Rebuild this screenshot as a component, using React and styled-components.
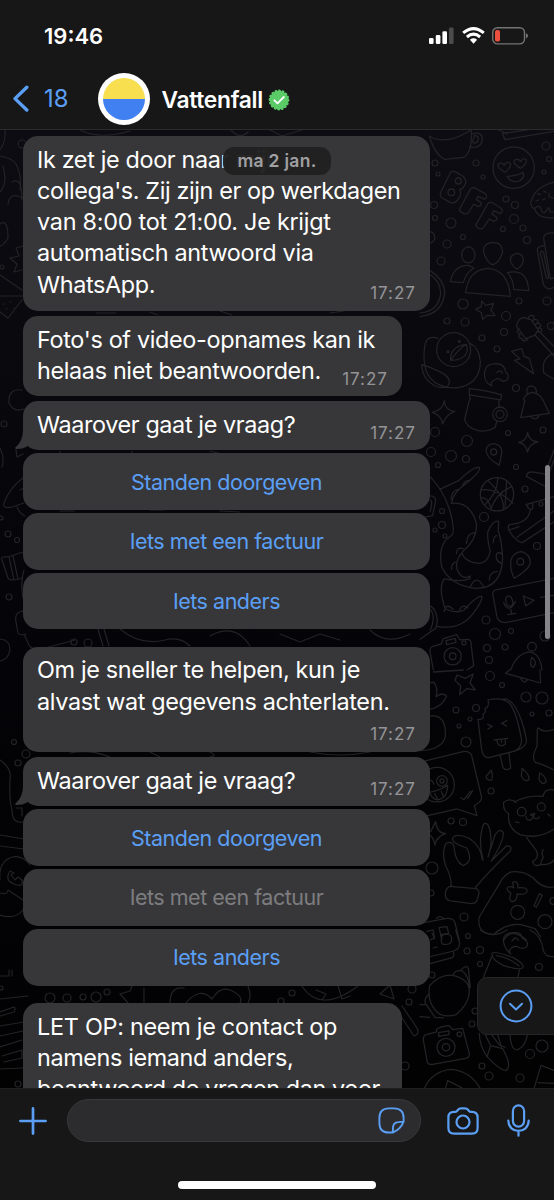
import React from "react";
import styled, { createGlobalStyle } from "styled-components";

const chat = [
  {
    width: 407,
    height: 174.8,
    gap: 5.2,
    time: "17:27",
    lines: [
      ["Ik zet je door naar mijn", -0.35],
      ["collega's. Zij zijn er op werkdagen", -0.38],
      ["van 8:00 tot 21:00. Je krijgt", -0.26],
      ["automatisch antwoord via", -0.33],
      ["WhatsApp.", -0.35],
    ],
  },
  {
    width: 379,
    height: 80,
    gap: 5,
    time: "17:27",
    lines: [
      ["Foto's of video-opnames kan ik", -0.33],
      ["helaas niet beantwoorden.", -0.35],
    ],
  },
  {
    width: 407,
    height: 49,
    gap: 3.3,
    time: "17:27",
    tail: true,
    lines: [["Waarover gaat je vraag?", -0.38]],
    options: [
      { label: "Standen doorgeven" },
      { label: "Iets met een factuur" },
      { label: "Iets anders" },
    ],
  },
  {
    width: 407,
    height: 105,
    gap: 5.3,
    time: "17:27",
    lines: [
      ["Om je sneller te helpen, kun je", -0.33],
      ["alvast wat gegevens achterlaten.", -0.35],
    ],
  },
  {
    width: 407,
    height: 49,
    gap: 3.3,
    time: "17:27",
    tail: true,
    lines: [["Waarover gaat je vraag?", -0.38]],
    options: [
      { label: "Standen doorgeven" },
      { label: "Iets met een factuur", disabled: true },
      { label: "Iets anders" },
    ],
  },
  {
    width: 379,
    height: 140,
    gap: 0,
    lines: [
      ["LET OP: neem je contact op", -0.27],
      ["namens iemand anders,", -0.38],
      ["beantwoord de vragen dan voor", -0.4],
    ],
  },
];

// Small bubbles scattered between the wallpaper drawings: x, y, radius
const dots = [
  [435, 163, 3], [438, 174, 2], [476, 163, 3], [483, 177, 2], [546, 146, 4], [549, 159, 2.5],
  [544, 172, 2], [434, 205, 3.5], [435, 218, 2.5], [451, 223, 5], [506, 199, 3], [515, 205, 3.5],
  [514, 219, 4.5], [503, 229, 2.5], [523, 228, 3], [463, 237, 2.5], [447, 244, 4], [527, 240, 3.5],
  [441, 261, 4], [463, 304, 5], [447, 321, 3], [465, 322, 4], [519, 301, 3], [547, 301, 4],
  [506, 316, 4.5], [504, 332, 3.5], [482, 338, 3], [497, 349, 3], [551, 326, 3.5], [516, 388, 3.5],
  [435, 432, 4.5], [467, 441, 5.5], [508, 433, 2.5], [543, 430, 3], [431, 452, 4.5], [451, 456, 5.5],
  [466, 459, 3.5], [438, 465, 2.5], [516, 467, 2.5], [525, 489, 3], [484, 517, 4.5], [442, 511, 2.5],
  [442, 525, 3.5], [435, 530, 2], [445, 536, 2], [541, 504, 2], [537, 546, 3.5], [486, 620, 4],
  [495, 634, 5.5], [511, 631, 2.5], [487, 648, 3.5], [505, 647, 3], [489, 660, 3.5], [545, 636, 5],
  [490, 676, 4.5], [502, 685, 2.5], [526, 697, 5], [542, 698, 6], [456, 710, 3], [476, 708, 3.5],
  [470, 719, 2], [459, 726, 2], [466, 742, 5], [532, 714, 2], [549, 713, 3], [491, 791, 3],
  [451, 821, 3], [463, 822, 3.5], [432, 868, 6], [431, 893, 3], [464, 917, 4], [468, 936, 2.5],
  [467, 951, 3], [480, 950, 3.5], [480, 964, 2.5], [539, 967, 3.5], [432, 975, 3], [475, 1011, 3],
  [472, 1024, 3], [530, 1054, 4.5], [542, 1046, 6], [482, 1066, 3], [489, 1076, 4], [520, 1078, 4],
  [22, 144, 4], [4, 424, 3], [8, 534, 3], [17, 540, 2.5], [9, 597, 3], [1, 518, 2],
  [14, 742, 2.5], [26, 754, 4], [18, 763, 3], [74, 642, 3], [88, 643, 4], [50, 998, 5],
  [67, 998, 4], [83, 997, 3], [96, 997, 5], [107, 992, 3], [292, 993, 3], [281, 1001, 3],
  [1, 988, 2], [18, 1084, 3], [409, 1002, 3], [405, 1066, 4], [412, 989, 4], [2, 267, 2],
];

const Wallpaper = () => (
  <Doodles viewBox="0 130 554 958" width="554" height="958" aria-hidden="true">
    <defs>
      <linearGradient id="night" x1="0" y1="0" x2="0" y2="1">
        <stop offset="0" stopColor="#0d0c13" />
        <stop offset="0.35" stopColor="#07070b" />
        <stop offset="0.65" stopColor="#030306" />
        <stop offset="1" stopColor="#020203" />
      </linearGradient>
    </defs>
    <rect y="130" width="554" height="958" fill="url(#night)" />
    <g fill="none" stroke="#232326" strokeWidth="1.2" strokeLinejoin="round" strokeLinecap="round">
      {dots.map(([x, y, r]) => (
        <circle key={`${x}-${y}`} cx={x} cy={y} r={r} />
      ))}

      {/* cup, BFF, smiley, cupcake, people, duck, guitar */}
      <g transform="translate(420 130) scale(.3333)" strokeWidth="3.8">
        <path d="M28 18Q45 75 75 88L130 82Q158 68 154 0M28 18Q75 48 150 2M155 12Q188 2 187 30Q181 58 148 50M163 17Q178 16 174 32Q166 45 158 36Z" />
        <path d="M236 0L262 12M247 10L255 29L402 4M247 10L320 0" />
        <circle cx="281" cy="113" r="62" />
        <path d="M255 127Q228 111 235 102Q246 94 252 106Q262 91 271 101Q274 112 255 127ZM302 115Q278 101 283 91Q294 83 302 95Q310 80 319 90Q322 100 302 115ZM261 139Q290 139 309 127Q315 145 297 153Q275 160 261 139Z" />
        <path d="M91 128Q98 120 111 128L129 139Q145 153 132 169Q130 176 119 178Q127 189 116 205Q106 223 90 217L67 204Q57 197 63 185Z" />
        <circle cx="115" cy="153" r="9" />
        <circle cx="94" cy="187" r="10" />
        <path d="M152 176Q160 170 170 177L196 191Q204 200 194 208L174 199L169 209L183 217Q187 226 176 230L161 223L144 249Q134 256 120 244Q117 240 122 231ZM204 220Q211 214 220 220L243 235Q252 243 241 251L221 242L216 252L230 262Q233 272 221 274L208 267L191 292Q182 302 169 290Q165 284 172 277Z" />
        <path d="M402 156Q340 172 332 220Q336 236 344 235Q350 265 402 264M344 235Q359 222 364 239Q370 259 381 239Q388 224 390 246L402 247M348 213L356 210M353 191L360 194M371 183L378 187M368 210L375 206M388 190Q382 204 402 205" />
        <ellipse cx="145" cy="375" rx="20" ry="24" />
        <path d="M218 337Q188 340 191 368Q205 404 219 404Q238 399 248 365Q247 337 218 337ZM290 370Q268 375 272 396Q285 418 292 417Q311 405 310 386Q305 370 290 370Z" />
        <path d="M91 455Q101 405 145 406L162 414Q138 428 130 458ZM137 488Q145 419 204 415Q265 420 271 499ZM262 428Q323 414 326 482L281 478Q280 446 262 428Z" />
        <path d="M30 422Q72 448 74 488Q68 552 0 560M30 434Q60 451 62 490Q56 544 0 549M30 305Q46 308 44 328Q39 338 30 340" />
        <path d="M185 513L197 526L221 520L213 540L225 557L202 556L188 568L184 548L167 538L184 530Z" />
        <path d="M402 309Q370 307 371 325L391 447L402 444M371 347Q351 350 352 361L370 463Q382 484 402 472M364 363Q359 371 364 380L379 444Q386 450 385 438L371 367Z" />
        <circle cx="101" cy="659" r="51" />
        <path d="M54 625Q24 615 16 640Q9 669 14 706Q26 772 108 774Q181 763 181 695Q177 651 151 641M5 704Q28 710 65 728Q100 748 82 770Q48 781 18 745Q5 724 5 704ZM92 691Q88 650 139 643Q151 679 109 690ZM92 691Q118 655 139 643" />
        <circle cx="118" cy="634" r="3" />
        <circle cx="84" cy="665" r="3" />
        <path d="M309 562L333 569L355 600L344 616L317 626L290 590Q291 569 309 562ZM325 568Q325 552 342 558Q341 574 336 575Q349 561 355 576L345 585Q358 573 363 588L352 596Q370 590 363 607L354 606M297 596Q285 607 301 613Q290 622 307 627Q306 637 322 629M345 615L402 678M356 603L402 650M402 670Q361 684 372 730L402 748" />
        <path d="M274 664L305 656L312 679L328 685L341 731L283 691L300 687Z" />
        <path d="M194 742Q190 704 221 702Q253 697 258 728Q270 735 261 750Q247 759 239 747L228 747Q207 756 216 768Q198 760 194 742ZM230 728Q242 716 247 730" />
        <path d="M148 776Q195 780 245 795L242 810L148 795ZM148 795L151 810M322 790Q316 770 335 768Q353 774 348 791M310 810Q315 791 337 787Q360 791 368 810" />
      </g>

      {/* mug, bell, pins, ball, octopus, shoe, voice note, camera */}
      <g transform="translate(420 400) scale(.3333)" strokeWidth="3.8">
        <path d="M148 0L134 58Q139 82 174 92Q203 97 226 82L230 64M236 0L238 22M315 0L302 53L388 40L369 0M331 49Q347 67 359 44" />
        <circle cx="240" cy="43" r="22" />
        <circle cx="240" cy="43" r="12" />
        <path d="M73 2Q74 31 105 34Q78 42 68 72Q64 45 37 37Q70 30 73 2ZM323 97Q327 124 354 126Q329 131 322 156Q319 132 296 127Q320 123 323 97ZM238 196Q199 175 198 151Q202 131 222 131Q249 137 245 160ZM283 535Q269 510 273 479Q283 455 306 455Q332 464 331 491Q322 512 283 535Z" />
        <circle cx="221" cy="156" r="9" />
        <circle cx="301" cy="485" r="10" />
        <circle cx="231" cy="283" r="50" />
        <path d="M184 270Q228 262 279 310M204 242Q257 291 249 329M233 234Q235 276 194 315M276 260Q228 278 212 329M185 293Q206 293 213 326M260 242L255 325" />
        <path d="M30 230Q70 270 89 330Q109 402 92 408Q52 432 65 500Q92 558 170 565Q244 565 248 476Q245 420 235 393L236 364Q220 358 204 394Q200 413 211 454Q203 489 177 490Q136 487 125 459M59 268L116 242Q160 199 178 202Q185 212 139 250Q98 279 94 310Q154 304 170 375Q169 421 129 454Q95 493 121 525Q134 538 151 528L149 536Q123 548 72 537Q54 566 76 627Q110 642 132 630Q174 584 186 590Q186 605 159 641Q121 692 51 679M93 297Q97 270 115 268M128 257Q135 240 146 242M139 430Q142 399 164 399M109 461Q111 439 129 446M95 508Q92 489 111 486M220 429Q219 409 231 407M244 490Q224 482 230 461Q237 455 246 462M208 540Q208 516 232 514M150 562Q169 520 190 559M72 635Q79 606 100 629M118 630Q129 610 144 624" />
        <path d="M30 288Q50 288 46 307L38 347L0 354M30 300Q40 302 30 335M30 617Q50 629 52 663L48 684L0 718M30 627Q49 651 31 690" />
        <path d="M318 314L402 290M319 313Q325 331 337 327Q341 314 336 311M331 331Q324 369 272 373Q261 373 267 391Q285 424 307 428L402 365M291 412L402 333M268 390L297 380M402 150L378 215M374 222L334 216Q321 216 319 229L373 258M402 180L384 229" />
        <path d="M402 535L231 569Q216 571 219 586L231 651Q236 667 255 668L402 638M264 588Q252 591 261 615Q273 624 279 611Q277 588 264 588ZM251 608Q267 642 286 605M272 628L276 643M264 644L287 640M310 588L317 618L342 601ZM361 592L402 586" />
        <path d="M44 738L64 732L70 716L110 704L120 720L145 718Q154 721 153 731L161 797L141 810M44 738Q28 740 30 756L40 810M78 722L106 715L108 727L80 734Z" />
        <circle cx="98" cy="769" r="26" />
        <circle cx="98" cy="769" r="10" />
        <circle cx="132" cy="729" r="6" />
        <path d="M272 810Q292 758 330 756Q361 762 366 810M336 772Q325 800 341 802Q353 785 336 772Z" />
        <circle cx="336" cy="740" r="13" />
      </g>

      {/* ice cream, sticker bubble, bear, ok hand, gamepad */}
      <g transform="translate(420 670) scale(.3333)" strokeWidth="3.8">
        <path d="M40 6L130 0M257 10L362 39L360 0M257 10L268 0M302 24Q312 46 323 28M111 15L136 25L160 12L150 39L166 60L140 56L119 74L122 48L105 31Z" />
        <path d="M204 90Q244 80 268 99Q290 125 305 211Q303 238 281 244L210 262Q190 266 185 240L174 148Q194 150 189 133Q199 128 195 116Q209 111 204 90ZM250 87Q280 84 304 150Q323 209 318 220Q309 238 281 244M241 258L249 293Q257 304 272 294L267 250M203 163L217 169L204 177M261 152L245 160L260 168M222 210L263 205M230 210L233 220Q242 234 256 222L256 206M244 209L245 217" />
        <path d="M30 38L42 37Q55 55 48 80Q66 65 80 78Q69 109 30 118M30 138Q79 131 76 200Q66 240 0 242" />
        <path d="M10 274L132 244Q150 243 155 257L185 382Q184 397 163 406L171 437L111 417L0 442M123 383L132 389L151 364M143 386L158 362" />
        <circle cx="51" cy="344" r="52" />
        <circle cx="66" cy="333" r="16" />
        <circle cx="66" cy="333" r="6" />
        <path d="M28 367Q61 362 83 346Q82 386 52 390Q37 388 28 367ZM44 371L54 390M64 364L71 381M30 330Q38 332 42 342M214 301Q221 327 213 331Q196 330 199 318ZM306 295Q330 315 327 329Q313 338 304 318ZM359 309Q379 319 378 336Q365 347 357 328ZM402 178Q370 190 356 174Q350 174 352 190L351 229Q333 263 346 277Q367 282 402 300" />
        <path d="M289 397Q268 382 251 397Q248 420 266 431Q261 475 300 494Q355 509 402 477M282 396Q324 374 369 379Q374 354 402 360M331 434L344 430L340 439ZM318 439Q319 453 332 450Q339 446 339 440Q349 453 358 441M286 456L297 458M384 432L390 438M320 503L349 542Q359 562 338 575Q340 592 363 584Q361 574 370 562Q362 548 370 539M363 584Q391 586 402 570" />
        <circle cx="305" cy="425" r="13" />
        <circle cx="364" cy="411" r="12" />
        <path d="M94 649Q93 615 77 588Q63 545 79 519Q98 513 102 530Q105 576 130 587Q162 573 140 534Q100 522 97 506Q105 488 146 504Q183 527 187 569M189 570Q173 507 191 462Q209 452 213 505Q215 529 204 561M204 561L226 493Q240 473 250 488Q251 515 213 574L259 528Q278 526 271 543Q217 593 164 655M91 649L160 655Q177 655 177 669L171 692Q163 704 150 700L91 693Q75 689 76 672Q77 652 91 649ZM47 455Q51 490 77 491Q48 500 45 526Q41 503 30 496M47 455L32 485" />
        <path d="M402 651Q367 657 340 624Q309 601 275 606Q259 610 248 625L178 741Q168 789 220 794Q261 758 303 764L345 776L362 800M278 637Q295 628 294 654Q324 650 321 665Q317 676 291 672Q291 696 276 695Q264 690 273 670Q258 661 262 654Q267 646 281 654ZM358 671L367 676L349 712L342 708ZM252 810Q274 770 319 810" />
        <circle cx="293" cy="727" r="21" />
        <circle cx="375" cy="755" r="21" />
        <circle cx="400" cy="693" r="10" />
        <path d="M0 760L80 745Q102 744 105 759L118 810M49 745Q60 735 69 744M20 784L40 780L44 806M57 773L81 770L86 790L62 794ZM62 794L65 810" />
      </g>

      {/* clock, croissant, jar, camera and the bottom edge */}
      <g transform="translate(420 930) scale(.3333)" strokeWidth="3.8">
        <path d="M107 0L119 40Q118 58 101 63L0 87M30 101L97 83Q105 76 100 66M36 9L43 25L32 29M61 17L82 12M66 20Q60 44 72 43Q95 45 95 28Q96 15 82 12M40 54L52 51" />
        <path d="M29 167Q62 131 98 136Q148 147 148 184Q147 224 107 255Q62 265 44 238Q21 210 29 167ZM99 136Q102 122 122 121Q149 133 148 184M122 121Q138 103 145 115L151 172M28 191Q13 203 15 218L45 262L70 264M15 224L0 224M0 260L29 262" />
        <path d="M217 69Q225 63 280 83Q318 105 307 114Q297 121 249 106Q210 85 217 69ZM229 77Q265 81 297 108M215 81L190 142M299 119L293 142M250 34Q250 6 284 8Q304 7 306 23Q329 36 320 50Q308 60 293 50L283 49Q262 58 272 72Q255 58 250 34ZM330 0Q365 17 370 61Q376 82 402 80M181 0Q218 27 261 0M276 33Q287 16 295 31" />
        <path d="M50 306L49 298Q61 289 88 287L98 299L128 295L148 371Q150 382 137 385L38 403Q22 406 21 392L10 330Q9 315 21 313ZM56 308L87 303L87 314L56 319Z" />
        <circle cx="78" cy="352" r="27" />
        <circle cx="78" cy="352" r="11" />
        <circle cx="118" cy="313" r="7" />
        <path d="M178 310Q178 345 201 381L212 347L196 315M212 347L248 356Q278 409 258 422Q236 419 202 380M212 310L238 345L255 352M233 314L244 350M270 315Q273 360 292 360Q315 352 322 315M14 473Q38 422 96 418Q152 425 179 473M83 452L77 473M83 452L125 473M343 473L363 406L402 421M354 458L402 460" />
      </g>

      {/* left edge */}
      <path d="M0 150Q6 142 5 130M0 156Q12 158 16 164Q22 176 20 190M0 192Q8 184 3 166M12 182Q22 176 22 200M8 204Q10 191 23 198M0 224Q8 218 8 238Q3 246 0 246M23 246L16 248L19 256L10 258L17 264L14 272L22 270M0 275L22 290M0 296H23M0 312L8 318L22 300M3 304h1M10 302h1M6 309h1M14 308h1" />
      <path d="M22 390Q8 388 9 403Q14 413 24 409M0 448Q5 458 2 467M16 450L17 457L23 454M4 503Q10 487 23 478M4 503Q2 509 12 507L24 503M20 490L24 488M17 507Q20 514 25 516M2 560Q0 556 8 557L23 552M2 560L8 578Q10 582 23 578M9 557L14 580M13 556L18 579M24 570Q20 582 23 598M0 639Q10 640 10 650Q8 660 0 661M23 611Q14 612 16 622L18 633Q20 636 26 634M24 634L29 645Q32 651 45 648L75 640M98 629L103 646M104 629L109 646" />
      <path d="M0 760Q12 768 10 780Q9 800 12 810Q12 824 23 822M16 808h6v8M0 835L30 840M0 846L24 849M0 893Q8 895 8 890L23 900M0 915Q15 920 23 910M0 880Q-2 862 12 857Q23 855 30 865M10 871Q4 880 14 884Q24 888 22 880L18 877L15 880L11 875L14 873Z" />
      <path d="M0 999L28 996M0 1012L14 1007Q16 1009 14 1012L0 1016M0 1026L24 1022M0 1036L23 1031M0 1047L22 1040M2 1056L22 1050V1058L4 1062M0 1069L23 1068M0 976H9V970M12 976V970M120 994L130 991L132 986M120 994L128 1003M144 988V1003M170 1003Q170 986 184 988M186 1003Q200 986 212 999Q220 986 230 990Q244 996 240 1003M248 986Q252 996 248 1003M302 986Q320 1014 358 986M316 990L326 994L322 1000M338 986L342 999L350 996M390 985L394 999L380 994ZM402 1006L417 1028Q420 1034 414 1036L402 1018" />
      <path d="M80 130Q100 140 130 131M231 130Q240 140 248 132M270 130L282 136L302 130M96 313h20M150 312l8 3M220 311l12 4M330 313l14-2M60 451v2M132 451v2M210 451l8 2M60 511h14M150 510h14M220 511l20 1M120 629Q140 646 165 640Q180 636 190 646M210 636Q235 622 250 646M280 634l20 8l20-8l20 6M370 630q16 16 40 4M70 753q20-4 40 4M150 752l10 5M210 752q8 4 0 5M310 752q30 6 60 0" />
    </g>
  </Doodles>
);

const Bubble = ({ message }) => (
  <MessageBox $width={message.width} $height={message.height} $gap={message.gap}>
    {message.lines.map(([text, spacing]) => (
      <Line key={text} $spacing={spacing}>
        {text}
      </Line>
    ))}
    {message.time && <Time>{message.time}</Time>}
    {message.tail && (
      <Tail viewBox="0 0 16 20" aria-hidden="true">
        <path d="M8 0Q8 11 .5 17.6Q-.4 18.8 1.4 18.9Q8 19 12 16.4L16 12V0Z" />
      </Tail>
    )}
  </MessageBox>
);

export default function App() {
  return (
    <>
      <GlobalStyle />
      <Phone>
        <Header>
          <StatusBar>
            <Clock>19:46</Clock>
            <StatusIcons>
              <svg width="25" height="17" viewBox="0 0 25 17">
                <rect x="0" y="11" width="4.6" height="6" rx="1.3" fill="#fff" />
                <rect x="6.8" y="8" width="4.6" height="9" rx="1.3" fill="#fff" />
                <rect x="13.4" y="4.3" width="4.6" height="12.7" rx="1.3" fill="#fff" />
                <rect x="20" y="0.4" width="4.6" height="16.6" rx="1.3" fill="#4b4b4b" />
              </svg>
              <svg width="23" height="17" viewBox="0 0 23 17" fill="none" stroke="#fff" strokeWidth="3">
                <path d="M1.2 5.9Q11.5-2.7 21.8 5.9" />
                <path d="M4.9 10Q11.5 4.2 18.1 10" />
                <path d="M7.9 12.7Q11.5 9.9 15.1 12.7L11.5 16.8Z" fill="#fff" stroke="none" />
              </svg>
              <svg width="37" height="18" viewBox="0 0 37 18">
                <rect x="0.7" y="0.7" width="31.8" height="16.2" rx="4.8" fill="none" stroke="#747474" strokeWidth="1.4" />
                <rect x="3" y="3" width="5" height="11.6" rx="1.9" fill="#ea4e3e" />
                <path d="M34 6.2Q36 7 36 8.8Q36 10.6 34 11.4Z" fill="#747474" />
              </svg>
            </StatusIcons>
          </StatusBar>
          <ContactBar>
            <BackIcon viewBox="0 0 17 28">
              <path d="M14.8 2.2L3 13.6L14.8 25" />
            </BackIcon>
            <Unread>18</Unread>
            <Avatar>
              <Logo />
            </Avatar>
            <ContactName>Vattenfall</ContactName>
            <Badge viewBox="-11 -11 22 22">
              <circle r="9.3" fill="#5bcb68" />
              <circle r="9.2" fill="none" stroke="#5bcb68" strokeWidth="2.4" strokeLinecap="round" strokeDasharray="0.6 3.013" />
              <path d="M-4.6 .3L-1.5 3.4L4.8-3" fill="none" stroke="#fff" strokeWidth="1.8" strokeLinecap="round" strokeLinejoin="round" />
            </Badge>
          </ContactBar>
        </Header>

        <Chat>
          <Wallpaper />
          <Messages>
            {chat.map((message, index) => (
              <React.Fragment key={index}>
                <Bubble message={message} />
                {message.options && (
                  <Options>
                    {message.options.map((option) => (
                      <Option key={option.label} disabled={option.disabled}>
                        {option.label}
                      </Option>
                    ))}
                  </Options>
                )}
              </React.Fragment>
            ))}
          </Messages>
          <DateLabel>ma 2 jan.</DateLabel>
          <ScrollThumb />
          <ScrollDown>
            <svg width="34" height="34" viewBox="0 0 34 34">
              <circle cx="17" cy="17" r="15.4" />
              <path d="M11 14.8L17 20.4L23 14.8" />
            </svg>
          </ScrollDown>
        </Chat>

        <Footer>
          <Composer>
            <PlusIcon viewBox="0 0 28 28">
              <path d="M14 1.4V26.6M1.4 14H26.6" />
            </PlusIcon>
            <Input>
              <svg width="27" height="27" viewBox="0 0 27 27">
                <path d="M14.8 25.5H11Q1.4 25.5 1.4 15.9V11Q1.4 1.4 11 1.4H16Q25.6 1.4 25.6 11V14.6Q22.5 22.4 14.8 25.5ZM14.8 25.5L15 20.6Q15.2 15.4 20.4 15.1L25.6 14.6" />
              </svg>
            </Input>
            <CameraIcon viewBox="0 0 32 28">
              <path d="M9.8 4.2L11 2.8Q12.2 1.4 14 1.4H18Q19.8 1.4 21 2.8L22.2 4.2Q22.8 4.8 24 4.8H25Q30.6 4.8 30.6 10.4V21Q30.6 26.6 25 26.6H7Q1.4 26.6 1.4 21V10.4Q1.4 4.8 7 4.8H8Q9.2 4.8 9.8 4.2Z" />
              <circle cx="16" cy="15" r="6.5" />
            </CameraIcon>
            <MicIcon viewBox="0 0 23 33">
              <rect x="5.9" y="1.3" width="11.2" height="21.4" rx="5.6" />
              <path d="M1.3 16.6C1.3 30.3 21.7 30.3 21.7 16.6M11.5 26.9V31.7" />
            </MicIcon>
          </Composer>
          <HomeIndicator />
        </Footer>
      </Phone>
    </>
  );
}

const GlobalStyle = createGlobalStyle`
  * {
    box-sizing: border-box;
  }
  body {
    margin: 0;
    background: #171717;
  }
`;

const Phone = styled.div`
  display: flex;
  flex-direction: column;
  width: 554px;
  height: 1200px;
  overflow: hidden;
  background: #171717;
  color: #fff;
  font-family: Inter, "Liberation Sans", sans-serif;
`;

const Header = styled.header`
  flex: none;
  height: 130px;
  border-bottom: 1px solid #2b2b2d;
`;

const StatusBar = styled.div`
  display: flex;
  justify-content: space-between;
  height: 72px;
  padding: 22px 25px 0 44px;
`;

const Clock = styled.span`
  font-size: 22px;
  line-height: 28px;
  font-weight: 600;
  letter-spacing: 0;
`;

const StatusIcons = styled.div`
  display: flex;
  align-items: flex-start;
  gap: 7.5px;
  padding-top: 4.5px;
`;

const ContactBar = styled.div`
  display: flex;
  align-items: center;
  height: 53px;
  padding-left: 12px;
`;

const BackIcon = styled.svg`
  width: 17px;
  height: 28px;
  fill: none;
  stroke: #5b9ff5;
  stroke-width: 3.4;
  stroke-linecap: round;
  stroke-linejoin: round;
`;

const Unread = styled.span`
  width: 54px;
  margin-left: 15px;
  color: #5b9ff5;
  font-size: 23.8px;
`;

const Avatar = styled.div`
  width: 52px;
  height: 52px;
  padding: 5px;
  border-radius: 50%;
  background: #fff;
`;

const Logo = styled.div`
  height: 100%;
  border-radius: 50%;
  background: linear-gradient(#f7df4f 49%, #7d9a9a 49%, #7d9a9a 51%, #4080f0 51%);
`;

const ContactName = styled.span`
  margin: 2px 5.5px 0 11.5px;
  font-size: 22.8px;
  font-weight: 600;
  letter-spacing: -0.3px;
`;

const Badge = styled.svg`
  width: 22px;
  height: 22px;
  margin-top: 2px;
`;

const Chat = styled.main`
  position: relative;
  flex: none;
  height: 958px;
  overflow: hidden;
`;

const Doodles = styled.svg`
  position: absolute;
  top: 0;
  left: 0;
`;

const Messages = styled.div`
  position: relative;
  display: flex;
  flex-direction: column;
  align-items: flex-start;
  padding: 6px 0 0 23px;
`;

const MessageBox = styled.div`
  position: relative;
  flex: none;
  width: ${(props) => props.$width}px;
  height: ${(props) => props.$height}px;
  margin-bottom: ${(props) => props.$gap}px;
  padding: 7.6px 0 0 14px;
  border-radius: 15px;
  background: #373739;
`;

const Line = styled.p`
  margin: 0;
  font-size: 23.4px;
  line-height: 31.3px;
  letter-spacing: ${(props) => props.$spacing}px;
  white-space: nowrap;
`;

const Time = styled.span`
  position: absolute;
  right: 14px;
  bottom: 6.4px;
  color: #949497;
  font-size: 17px;
  line-height: 22px;
  letter-spacing: 1px;
`;

const Tail = styled.svg`
  position: absolute;
  left: -8px;
  bottom: 0;
  width: 16px;
  height: 20px;
  fill: #373739;
`;

const Options = styled.div`
  display: flex;
  flex-direction: column;
  gap: 3px;
  margin-bottom: 17.5px;
`;

const Option = styled.button`
  width: 407px;
  height: 56.7px;
  padding: 0;
  border: none;
  border-radius: 15px;
  background: #373739;
  color: ${(props) => (props.disabled ? "#7d7d80" : "#5b9ff5")};
  font-family: inherit;
  font-size: 21.5px;
  letter-spacing: -0.48px;
`;

const DateLabel = styled.div`
  position: absolute;
  top: 17px;
  left: 223px;
  width: 108px;
  height: 28px;
  border-radius: 11px;
  background: rgba(33, 33, 33, 0.97);
  color: #a0a0a2;
  font-size: 17.5px;
  font-weight: 600;
  line-height: 28px;
  letter-spacing: 0.3px;
  text-align: center;
`;

const ScrollThumb = styled.div`
  position: absolute;
  top: 335px;
  right: 4px;
  width: 5px;
  height: 174px;
  border-radius: 3px;
  background: #858587;
`;

const ScrollDown = styled.div`
  position: absolute;
  top: 847px;
  right: -1px;
  display: flex;
  align-items: center;
  width: 78px;
  height: 58px;
  padding-left: 21px;
  border: 1px solid #252527;
  border-radius: 10px 0 0 10px;
  background: #171717;
  svg {
    fill: none;
    stroke: #5b9ff5;
    stroke-width: 2;
    stroke-linecap: round;
    stroke-linejoin: round;
  }
`;

const Footer = styled.footer`
  display: flex;
  flex-direction: column;
  align-items: center;
  flex: 1;
  border-top: 1px solid #202020;
`;

const Composer = styled.div`
  display: flex;
  align-items: center;
  width: 100%;
  height: 63px;
  padding: 0 0 0 19px;
  svg {
    flex: none;
    fill: none;
    stroke: #5b9ff5;
    stroke-width: 2.2;
    stroke-linecap: round;
    stroke-linejoin: round;
  }
`;

const PlusIcon = styled.svg`
  width: 28px;
  height: 28px;
  && {
    stroke-width: 2.7;
  }
`;

const Input = styled.div`
  display: flex;
  align-items: center;
  justify-content: flex-end;
  width: 354px;
  height: 43px;
  margin-left: 20px;
  padding-right: 15px;
  border: 1px solid #39393b;
  border-radius: 22px;
  background: #2c2c2e;
  svg {
    stroke-width: 1.9;
  }
`;

const CameraIcon = styled.svg`
  width: 32px;
  height: 28px;
  margin-left: 26px;
`;

const MicIcon = styled.svg`
  width: 23px;
  height: 33px;
  margin-left: 28px;
`;

const HomeIndicator = styled.div`
  width: 198px;
  height: 8px;
  margin-top: 29px;
  border-radius: 4px;
  background: #fff;
`;
